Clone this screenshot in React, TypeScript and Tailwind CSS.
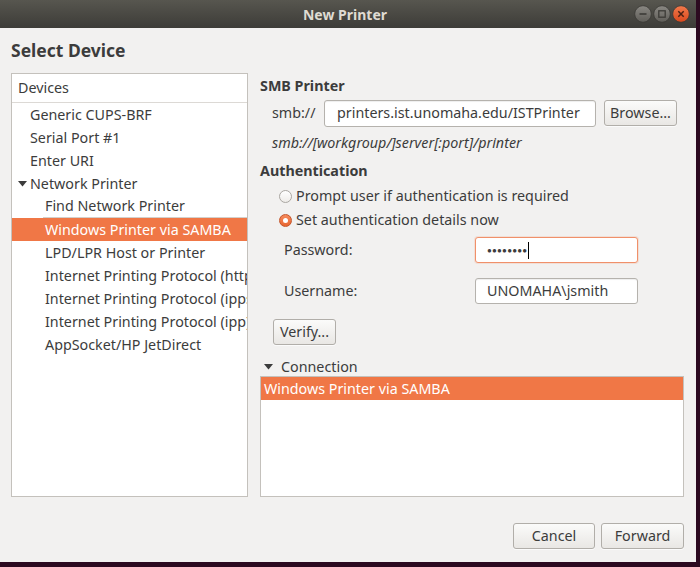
const devices: { label: string; level: number; arrow?: boolean; selected?: boolean; hint?: boolean }[] = [
  { label: 'Generic CUPS-BRF', level: 1 },
  { label: 'Serial Port #1', level: 1 },
  { label: 'Enter URI', level: 1 },
  { label: 'Network Printer', level: 1, arrow: true },
  { label: 'Find Network Printer', level: 2, hint: true },
  { label: 'Windows Printer via SAMBA', level: 2, selected: true },
  { label: 'LPD/LPR Host or Printer', level: 2 },
  { label: 'Internet Printing Protocol (http)', level: 2 },
  { label: 'Internet Printing Protocol (ipps)', level: 2 },
  { label: 'Internet Printing Protocol (ipp)', level: 2 },
  { label: 'AppSocket/HP JetDirect', level: 2 },
];

function DownArrow({ className }: { className?: string }) {
  return (
    <svg width="9" height="6" viewBox="0 0 9 6" className={className}>
      <path d="M0 0 H9 L4.5 5.5 Z" fill="#3c3c3c" />
    </svg>
  );
}

function TitleButton({ kind }: { kind: 'min' | 'max' | 'close' }) {
  const fill = kind === 'close' ? 'url(#closeGrad)' : 'url(#grayGrad)';
  return (
    <svg width="18" height="18" viewBox="0 0 18 18">
      <defs>
        <linearGradient id="grayGrad" x1="0" y1="0" x2="0" y2="1">
          <stop offset="0" stopColor="#8a8883" />
          <stop offset="1" stopColor="#5f5d58" />
        </linearGradient>
        <linearGradient id="closeGrad" x1="0" y1="0" x2="0" y2="1">
          <stop offset="0" stopColor="#f27a4c" />
          <stop offset="1" stopColor="#d9481d" />
        </linearGradient>
      </defs>
      <circle cx="9" cy="9" r="8.3" fill={fill} stroke="#3a3935" strokeWidth="0.8" />
      {kind === 'min' && <path d="M5.5 9 H12.5" stroke="#3c3b37" strokeWidth="1.6" />}
      {kind === 'max' && <rect x="5.8" y="5.8" width="6.4" height="6.4" fill="none" stroke="#3c3b37" strokeWidth="1.3" />}
      {kind === 'close' && <path d="M6.3 6.3 L11.7 11.7 M11.7 6.3 L6.3 11.7" stroke="#4a2013" strokeWidth="1.5" />}
    </svg>
  );
}

function GtkButton({ label, className }: { label: string; className?: string }) {
  return (
    <button
      type="button"
      className={`flex h-[26px] items-center justify-center rounded-[3px] border border-[#b1aea9] bg-linear-to-b from-[#fbfbfa] to-[#e9e7e4] text-[14.3px] text-[#3c3c3c] shadow-[0_1px_0_rgba(255,255,255,0.7)] ${className ?? ''}`}
    >
      {label}
    </button>
  );
}

function Radio({ checked }: { checked?: boolean }) {
  return checked ? (
    <span className="flex h-[13px] w-[13px] items-center justify-center rounded-full border border-[#c5552a] bg-linear-to-b from-[#f58a5c] to-[#e8652f]">
      <span className="h-[5px] w-[5px] rounded-full bg-white" />
    </span>
  ) : (
    <span className="h-[13px] w-[13px] rounded-full border border-[#aaa7a2] bg-linear-to-b from-white to-[#eeece9]" />
  );
}

export default function App() {
  return (
    <div className="h-[567px] w-[700px] overflow-hidden bg-[#2c0a20] font-['Noto_Sans','Open_Sans',sans-serif] text-[14.3px] text-[#3c3c3c]">
      <div className="flex h-[562px] w-[696px] flex-col bg-[#f2f1f0]">
        {/* title bar */}
        <div className="flex h-[28px] items-center bg-linear-to-b from-[#57564f] to-[#3d3c38] pr-[6px]">
          <div className="w-[90px]" />
          <div className="flex-1 text-center text-[14px] font-bold text-[#dfdbd2]">New Printer</div>
          <div className="flex w-[90px] items-center justify-end gap-[1px]">
            <TitleButton kind="min" />
            <TitleButton kind="max" />
            <TitleButton kind="close" />
          </div>
        </div>

        <div className="flex flex-1 flex-col pl-[11px] pr-[12px]">
          <div className="flex h-[45px] items-center text-[17.5px] font-bold">Select Device</div>

          <div className="flex h-[424px] gap-[12px]">
            {/* device tree */}
            <div className="flex w-[237px] flex-col overflow-hidden border border-[#c4c1bc] bg-white">
              <div className="flex h-[29px] shrink-0 items-center border-b border-[#dcd9d5] pl-[6px]">Devices</div>
              {devices.map((d) => (
                <div
                  key={d.label}
                  className={`flex h-[23px] shrink-0 items-center whitespace-nowrap ${d.selected ? 'bg-[#f07746] text-white' : ''}`}
                >
                  {d.level === 1 ? (
                    <>
                      <div className="flex w-[18px] justify-center pl-[2px]">{d.arrow && <DownArrow />}</div>
                      <span>{d.label}</span>
                    </>
                  ) : d.hint ? (
                    <div className="ml-[31px] flex h-full flex-1 items-center border-b border-[#d3d0cc] pl-[2px]">{d.label}</div>
                  ) : (
                    <span className="pl-[33px]">{d.label}</span>
                  )}
                </div>
              ))}
            </div>

            {/* right side */}
            <div className="flex w-[424px] flex-col">
              <div className="flex h-[25px] items-center font-bold">SMB Printer</div>
              <div className="flex h-[30px] items-center">
                <span className="w-[64px] pl-[12px]">smb://</span>
                <div className="flex h-[27px] w-[272px] items-center rounded-[3px] border border-[#b5b2ad] bg-white pl-[12px] shadow-[inset_0_1px_1px_rgba(0,0,0,0.07)]">
                  printers.ist.unomaha.edu/ISTPrinter
                </div>
                <GtkButton label="Browse..." className="ml-[8px] w-[73px]" />
              </div>
              <div className="flex h-[30px] items-center pl-[12px] italic">smb://[workgroup/]server[:port]/printer</div>
              <div className="flex h-[26px] items-center font-bold">Authentication</div>
              <div className="flex h-[24px] items-center gap-[4px] pl-[19px]">
                <Radio />
                <span>Prompt user if authentication is required</span>
              </div>
              <div className="flex h-[24px] items-center gap-[4px] pl-[19px]">
                <Radio checked />
                <span>Set authentication details now</span>
              </div>
              <div className="mt-[5px] flex h-[26px] items-center">
                <span className="w-[215px] pl-[24px]">Password:</span>
                <div className="flex h-[26px] w-[163px] items-center rounded-[3px] border border-[#f0906a] bg-white pl-[11px] shadow-[0_0_0_1px_rgba(240,119,70,0.15)]">
                  <span className="text-[8px] tracking-[0.2px]">●●●●●●●●</span>
                  <span className="ml-[1px] h-[17px] w-px bg-black" />
                </div>
              </div>
              <div className="mt-[15px] flex h-[26px] items-center">
                <span className="w-[215px] pl-[24px]">Username:</span>
                <div className="flex h-[26px] w-[163px] items-center rounded-[3px] border border-[#b5b2ad] bg-white pl-[11px] shadow-[inset_0_1px_1px_rgba(0,0,0,0.07)]">
                  UNOMAHA\jsmith
                </div>
              </div>
              <div className="mt-[15px] pl-[13px]">
                <GtkButton label="Verify..." className="w-[63px]" />
              </div>
              <div className="mt-[13px] flex h-[18px] items-center">
                <DownArrow className="ml-[4px] mr-[8px]" />
                <span>Connection</span>
              </div>
              <div className="flex flex-1 flex-col border border-[#c4c1bc] bg-white">
                <div className="flex h-[23px] items-center bg-[#f07746] pl-[3px] text-white">Windows Printer via SAMBA</div>
              </div>
            </div>
          </div>

          <div className="mt-[26px] flex justify-end gap-[6px]">
            <GtkButton label="Cancel" className="w-[82px]" />
            <GtkButton label="Forward" className="w-[83px]" />
          </div>
        </div>
      </div>
    </div>
  );
}
